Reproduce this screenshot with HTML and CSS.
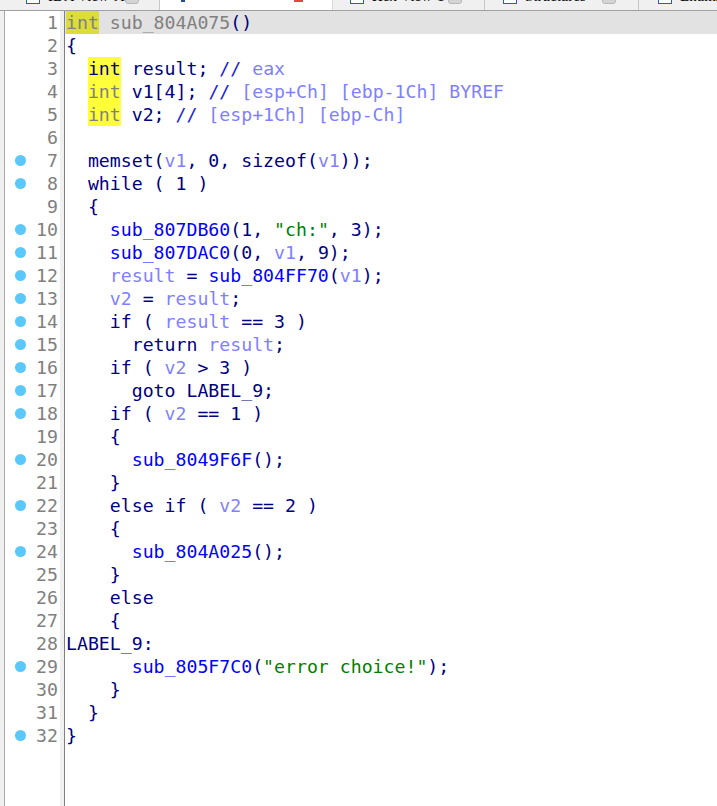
FILE: index.html
```html
<!DOCTYPE html>
<html>

<head>
	<meta http-equiv="Content-Type" content="text/html; charset=utf-8"/>
	<title>Pseudocode-A</title>
	<link rel="stylesheet" href="styles.css">
</head>

<body>
<div class="tabs">
	<div class="tab tab-ida">
		<span class="icon"></span><span class="label">IDA View-A</span><span class="close"></span>
	</div>
	<div class="tab tab-pseudo active">
		<span class="mark blue"></span><span class="mark red"></span>
	</div>
	<div class="tab tab-hex">
		<span class="icon"></span><span class="label">Hex View-1</span><span class="close"></span>
	</div>
	<div class="tab tab-struct">
		<span class="icon"></span><span class="label">Structures</span><span class="close"></span>
	</div>
	<div class="tab tab-enum">
		<span class="icon"></span><span class="label">Enums</span>
	</div>
</div>
<div class="view">
	<div class="edge"></div>
	<div class="gutter">
		<div class="num">1</div>
		<div class="num">2</div>
		<div class="num">3</div>
		<div class="num">4</div>
		<div class="num">5</div>
		<div class="num">6</div>
		<div class="num bp">7</div>
		<div class="num bp">8</div>
		<div class="num">9</div>
		<div class="num bp">10</div>
		<div class="num bp">11</div>
		<div class="num bp">12</div>
		<div class="num bp">13</div>
		<div class="num bp">14</div>
		<div class="num bp">15</div>
		<div class="num bp">16</div>
		<div class="num bp">17</div>
		<div class="num bp">18</div>
		<div class="num">19</div>
		<div class="num bp">20</div>
		<div class="num">21</div>
		<div class="num bp">22</div>
		<div class="num">23</div>
		<div class="num bp">24</div>
		<div class="num">25</div>
		<div class="num">26</div>
		<div class="num">27</div>
		<div class="num">28</div>
		<div class="num bp">29</div>
		<div class="num">30</div>
		<div class="num">31</div>
		<div class="num bp">32</div>
	</div>
	<div class="code">
<div class="line current"><span class="hl dim">int</span><span class="grey"> sub_804A075</span>()</div>
<div class="line">{</div>
<div class="line">  <span class="hl">int</span> result; <span class="cm">//</span><span class="cmt"> eax</span></div>
<div class="line">  <span class="hl grey">int</span> v1[4]; <span class="cm">//</span><span class="cmt"> [esp+Ch] [ebp-1Ch] BYREF</span></div>
<div class="line">  <span class="hl grey">int</span> v2; <span class="cm">//</span><span class="cmt"> [esp+1Ch] [ebp-Ch]</span></div>
<div class="line"> </div>
<div class="line">  memset(<span class="var">v1</span>, 0, sizeof(<span class="var">v1</span>));</div>
<div class="line">  while ( 1 )</div>
<div class="line">  {</div>
<div class="line">    <span class="fn">sub_807DB60</span>(1, <span class="str">"ch:"</span>, 3);</div>
<div class="line">    <span class="fn">sub_807DAC0</span>(0, <span class="var">v1</span>, 9);</div>
<div class="line">    <span class="var">result</span> = <span class="fn">sub_804FF70</span>(<span class="var">v1</span>);</div>
<div class="line">    <span class="var">v2</span> = <span class="var">result</span>;</div>
<div class="line">    if ( <span class="var">result</span> == 3 )</div>
<div class="line">      return <span class="var">result</span>;</div>
<div class="line">    if ( <span class="var">v2</span> &gt; 3 )</div>
<div class="line">      goto LABEL_9;</div>
<div class="line">    if ( <span class="var">v2</span> == 1 )</div>
<div class="line">    {</div>
<div class="line">      <span class="fn">sub_8049F6F</span>();</div>
<div class="line">    }</div>
<div class="line">    else if ( <span class="var">v2</span> == 2 )</div>
<div class="line">    {</div>
<div class="line">      <span class="fn">sub_804A025</span>();</div>
<div class="line">    }</div>
<div class="line">    else</div>
<div class="line">    {</div>
<div class="line">LABEL_9:</div>
<div class="line">      <span class="fn">sub_805F7C0</span>(<span class="str">"error choice!"</span>);</div>
<div class="line">    }</div>
<div class="line">  }</div>
<div class="line">}</div>
	</div>
</div>
</body>

</html>
```

FILE: styles.css
```css
        html,
        body {
            margin: 0;
            padding: 0;
            background: #fff;
        }

        body {
            width: 717px;
            height: 806px;
            overflow: hidden;
            font-family: "DejaVu Sans Mono", "Liberation Mono", monospace;
            font-size: 18.2px;
        }

        /* tab strip, only its bottom edge is on screen */
        .tabs {
            display: flex;
            height: 10px;
            background: #f0f0f0;
            border-bottom: 1px solid #a0a0a0;
            overflow: hidden;
        }

        .tab {
            display: flex;
            align-items: flex-start;
            height: 10px;
            border-right: 1px solid #c8c8c8;
            font-family: "Liberation Serif", serif;
            font-size: 15px;
            line-height: 16px;
            color: #000;
            box-sizing: border-box;
            overflow: hidden;
        }

        .tab-ida {
            width: 160px;
            padding-left: 26px;
        }

        .tab-pseudo {
            width: 173px;
            height: 11px;
            background: #fff;
            border-right: 1px solid #d8d8d8;
            margin-bottom: -1px;
        }

        .tab-hex {
            width: 152px;
            padding-left: 17px;
        }

        .tab-struct {
            width: 154px;
            padding-left: 18px;
        }

        .tab-enum {
            flex: 1;
            border-right: none;
            padding-left: 19px;
        }

        .tab .icon {
            flex: none;
            width: 14px;
            height: 13px;
            border: 1px solid #2a5db0;
            box-sizing: border-box;
            margin-top: -9px;
            margin-right: 8px;
            background: #fff;
        }

        .tab .label {
            margin-top: -12px;
            white-space: nowrap;
        }

        .tab .close {
            flex: none;
            width: 14px;
            height: 12px;
            border-radius: 3px;
            background: #d4d4d4;
            border: 1px solid #b8b8b8;
            box-sizing: border-box;
            margin-top: -8px;
            margin-left: auto;
            margin-right: 22px;
        }

        .mark {
            height: 2px;
        }

        .mark.blue {
            width: 4px;
            margin-left: 21px;
            background: #1f4f91;
        }

        .mark.red {
            width: 9px;
            margin-left: 109px;
            background: #e04a3c;
        }

        /* editor */
        .view {
            display: flex;
            height: 795px;
        }

        .edge {
            width: 4px;
            background: #f0f0f0;
            border-right: 1px solid #a8a8a8;
        }

        .gutter {
            width: 59px;
            border-right: 1px solid #808080;
            box-shadow: inset -4px 0 0 #f0f0f0;
        }

        .num {
            display: flex;
            align-items: center;
            justify-content: flex-end;
            height: 23px;
            padding-right: 6px;
            color: #808080;
            position: relative;
        }

        .num.bp::before {
            content: "";
            position: absolute;
            left: 10px;
            top: 6px;
            width: 11px;
            height: 11px;
            border-radius: 50%;
            background: #5ac8fb;
        }

        .code {
            flex: 1;
            color: #000080;
        }

        .line {
            height: 23px;
            line-height: 23px;
            padding-left: 1px;
            white-space: pre;
        }

        .line.current {
            background: #e2e2e2;
        }

        .hl {
            background: #ffff3a;
            display: inline-block;
            height: 23px;
        }

        .hl.dim {
            background: #dcdc3a;
            color: #808080;
        }

        .grey {
            color: #808080;
        }

        .var {
            color: #8080ff;
        }

        .fn {
            color: #0000ff;
        }

        .str {
            color: #008000;
        }

        .cm {
            color: #2020e0;
        }

        .cmt {
            color: #8080ff;
        }
```
